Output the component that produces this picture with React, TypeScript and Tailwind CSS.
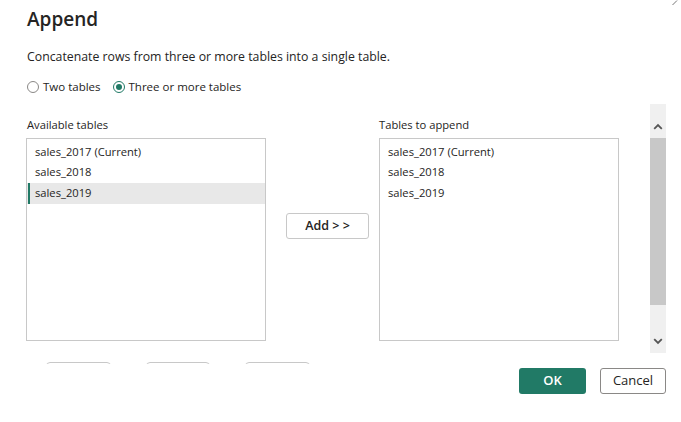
import React from "react";

const font = { fontFamily: '"Open Sans", "Noto Sans", Arial, sans-serif' };

function Radio({ checked }: { checked?: boolean }) {
  return (
    <span
      className={
        "flex h-[12px] w-[12px] items-center justify-center rounded-full border " +
        (checked ? "border-[#217a66]" : "border-[#8a8886]")
      }
    >
      {checked && <span className="h-[6px] w-[6px] rounded-full bg-[#217a66]" />}
    </span>
  );
}

function ListBox({ items, selected }: { items: string[]; selected?: number }) {
  return (
    <div className="h-[203px] w-[240px] border border-[#c8c8c8] bg-white py-[3px]">
      {items.map((t, i) => (
        <div
          key={t}
          className={
            "relative flex h-[20.5px] items-center pl-[8px] text-[11.2px] text-[#252423] " +
            (selected === i ? "bg-[#e8e8e8]" : "")
          }
        >
          {selected === i && (
            <span className="absolute left-[1px] top-0 h-full w-[2px] bg-[#217a66]" />
          )}
          {t}
        </div>
      ))}
    </div>
  );
}

export default function App() {
  const items = ["sales_2017 (Current)", "sales_2018", "sales_2019"];
  return (
    <div className="relative h-[422px] w-[681px] overflow-hidden bg-white text-[#252423]" style={font}>
      <svg className="absolute right-[3px] top-0" width="6" height="6" viewBox="0 0 6 6">
        <line x1="0.5" y1="5" x2="5" y2="0.5" stroke="#777" strokeWidth="1" />
      </svg>
      <div className="pl-[27px] pt-[5px] text-[19px] font-semibold leading-[28px]">Append</div>
      <div className="mt-[14px] pl-[27px] text-[12.3px] leading-[20px] text-[#252423]">
        Concatenate rows from three or more tables into a single table.
      </div>
      <div className="mt-[10px] flex h-[20px] items-center pl-[27px] text-[11.5px] text-[#252423]">
        <Radio />
        <span className="ml-[4px]">Two tables</span>
        <span className="ml-[12px]">
          <Radio checked />
        </span>
        <span className="ml-[4px]">Three or more tables</span>
      </div>
      <div className="mt-[7px] flex h-[260px]">
        <div className="w-[650px] overflow-hidden pl-[26px] pt-[12px]">
          <div className="flex">
            <div>
              <div className="h-[22px] pl-[1px] text-[11.2px] leading-[18px] text-[#252423]">Available tables</div>
              <ListBox items={items} selected={2} />
            </div>
            <div className="ml-[20px] pt-[97px]">
              <button className="flex h-[26px] w-[83px] items-center justify-center rounded-[3px] border border-[#c8c8c8] bg-white text-[12.5px] font-semibold text-[#252423]">
                Add &gt; &gt;
              </button>
            </div>
            <div className="ml-[10px]">
              <div className="h-[22px] text-[11.2px] leading-[18px] text-[#252423]">Tables to append</div>
              <ListBox items={items} />
            </div>
          </div>
          <div className="mt-[21px] flex pl-[20px]">
            <div className="h-[8px] w-[65px] rounded-t-[4px] border border-[#c8c8c8]" />
            <div className="ml-[35px] h-[8px] w-[64px] rounded-t-[4px] border border-[#c8c8c8]" />
            <div className="ml-[35px] h-[8px] w-[65px] rounded-t-[4px] border border-[#c8c8c8]" />
          </div>
        </div>
        <div className="flex h-[249px] w-[16px] flex-col bg-[#f0f0f0]">
          <div className="flex h-[34px] items-end justify-center pb-[8px]">
            <svg width="10" height="7" viewBox="0 0 10 7">
              <path d="M1.2 5.8 L5 2 L8.8 5.8" fill="none" stroke="#555" strokeWidth="1.8" />
            </svg>
          </div>
          <div className="h-[167px] bg-[#c8c8c8]" />
          <div className="flex flex-1 items-end justify-center pb-[8px]">
            <svg width="10" height="7" viewBox="0 0 10 7">
              <path d="M1.2 1.2 L5 5 L8.8 1.2" fill="none" stroke="#555" strokeWidth="1.8" />
            </svg>
          </div>
        </div>
      </div>
      <div className="mt-[4px] flex justify-end gap-[14px] pr-[15px]">
        <button className="flex h-[26px] w-[67px] items-center justify-center rounded-[3px] bg-[#217a66] text-[13px] font-semibold text-white">
          OK
        </button>
        <button className="flex h-[26px] w-[66px] items-center justify-center rounded-[3px] border border-[#8a8886] bg-white text-[13px] text-[#252423]">
          Cancel
        </button>
      </div>
    </div>
  );
}
